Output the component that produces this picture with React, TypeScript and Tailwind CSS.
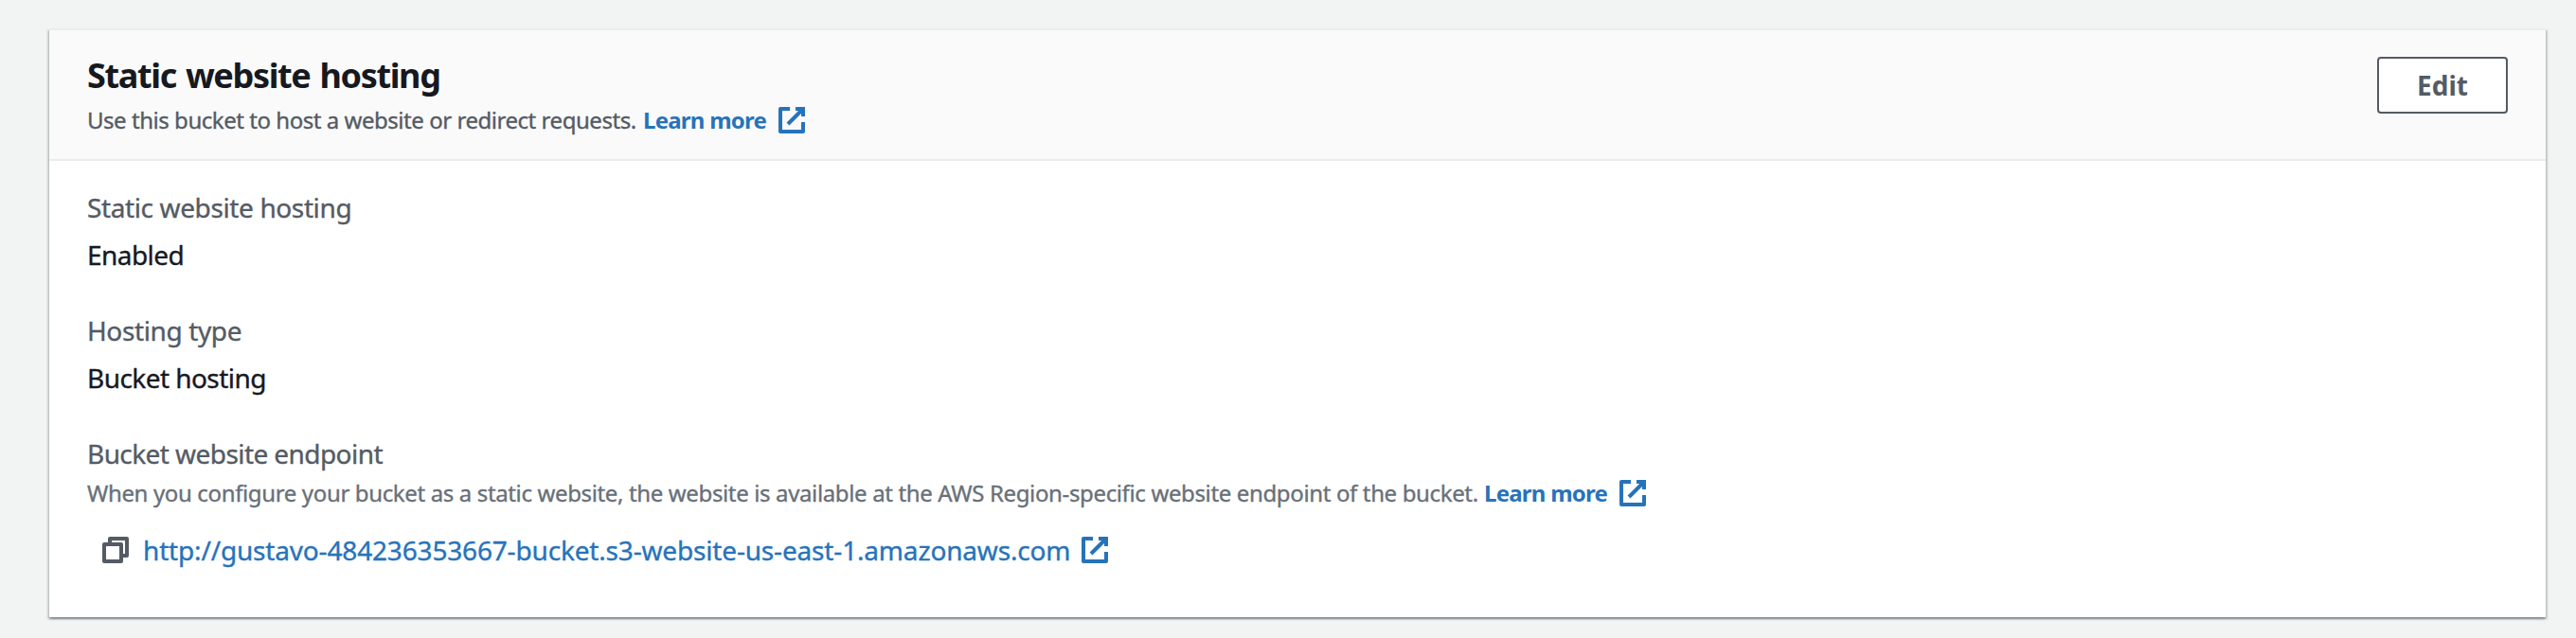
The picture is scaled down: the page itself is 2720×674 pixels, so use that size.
function ExternalIcon() {
  return (
    <svg viewBox="0 0 16 16" className="size-8 shrink-0 fill-none stroke-[#2773ba] stroke-2" aria-hidden="true">
      <path d="M10 2h4v4" />
      <path d="m6 10 8-8" />
      <path d="M14 9.05V14H2V2h5.05" strokeLinejoin="round" />
    </svg>
  );
}

function CopyIcon() {
  return (
    <svg viewBox="0 0 16 16" className="size-8 shrink-0 fill-none stroke-[#545b64] stroke-2" strokeLinejoin="round" aria-hidden="true">
      <path d="M2 5h9v9H2z" />
      <path d="M5 5V2h9v9h-3" />
    </svg>
  );
}

function LearnMore() {
  return (
    <a className="flex items-center text-[#2773ba]">
      <span className="w-[142px] pl-px font-bold tracking-[-0.75px]">Learn more</span>
      <ExternalIcon />
    </a>
  );
}

function Field({ label, value }: { label: string; value: string }) {
  return (
    <div className="text-[28px] leading-[50px]">
      <div className="tracking-[-0.38px] text-[#545b64] [-webkit-text-stroke:0.35px_#545b64]">{label}</div>
      <div className="tracking-[-0.55px] text-[#16191f] [-webkit-text-stroke:0.35px_#16191f]">{value}</div>
    </div>
  );
}

export default function App() {
  return (
    <div className="h-[674px] w-full overflow-hidden bg-[#f2f3f3] pt-[30px] pr-8 pl-[52px] font-['Noto_Sans',sans-serif] whitespace-nowrap">
      <section className="h-[622px] border-t-2 border-[#eaeded] bg-white shadow-[0_2px_2px_0_rgba(0,28,36,0.3),2px_2px_2px_0_rgba(0,28,36,0.15),-2px_2px_2px_0_rgba(0,28,36,0.15)]">
        <header className="flex h-[138px] items-start justify-between border-b-2 border-[#eaeded] bg-[#fafafa] pr-10 pl-10">
          <div className="pt-[26px]">
            <h2 className="text-[36px] leading-[44px] font-bold tracking-[-1.35px] [word-spacing:2px] text-[#16191f]">Static website hosting</h2>
            <div className="mt-[5px] flex h-10 items-center text-[24px] leading-10">
              <p className="w-[586px] tracking-[-0.46px] text-[#545b64] [-webkit-text-stroke:0.35px_#545b64]">Use this bucket to host a website or redirect requests.</p>
              <LearnMore />
            </div>
          </div>
          <button className="mt-7 h-[60px] w-[138px] rounded-[4px] border-2 border-[#545b64] bg-white text-[28px] leading-[56px] font-bold text-[#545b64]">
            Edit
          </button>
        </header>
        <div className="flex flex-col gap-[30px] px-10 pt-6">
          <Field label="Static website hosting" value="Enabled" />
          <Field label="Hosting type" value="Bucket hosting" />
          <div>
            <div className="text-[28px] leading-[50px] tracking-[-0.57px] text-[#545b64] [-webkit-text-stroke:0.35px_#545b64]">Bucket website endpoint</div>
            <div className="flex h-[34px] items-center text-[24px] leading-[34px]">
              <p className="w-[1474px] tracking-[-0.36px] text-[#687078] [-webkit-text-stroke:0.35px_#687078]">
                When you configure your bucket as a static website, the website is available at the AWS Region-specific website endpoint of the bucket.
              </p>
              <LearnMore />
            </div>
            <div className="mt-[18px] flex h-[50px] items-center pl-[14px] text-[28px] leading-[50px]">
              <CopyIcon />
              <a className="ml-[13px] w-[989px] tracking-[-0.17px] text-[#2773ba] [-webkit-text-stroke:0.35px_#2773ba]">
                http://gustavo-484236353667-bucket.s3-website-us-east-1.amazonaws.com
              </a>
              <ExternalIcon />
            </div>
          </div>
        </div>
      </section>
    </div>
  );
}
